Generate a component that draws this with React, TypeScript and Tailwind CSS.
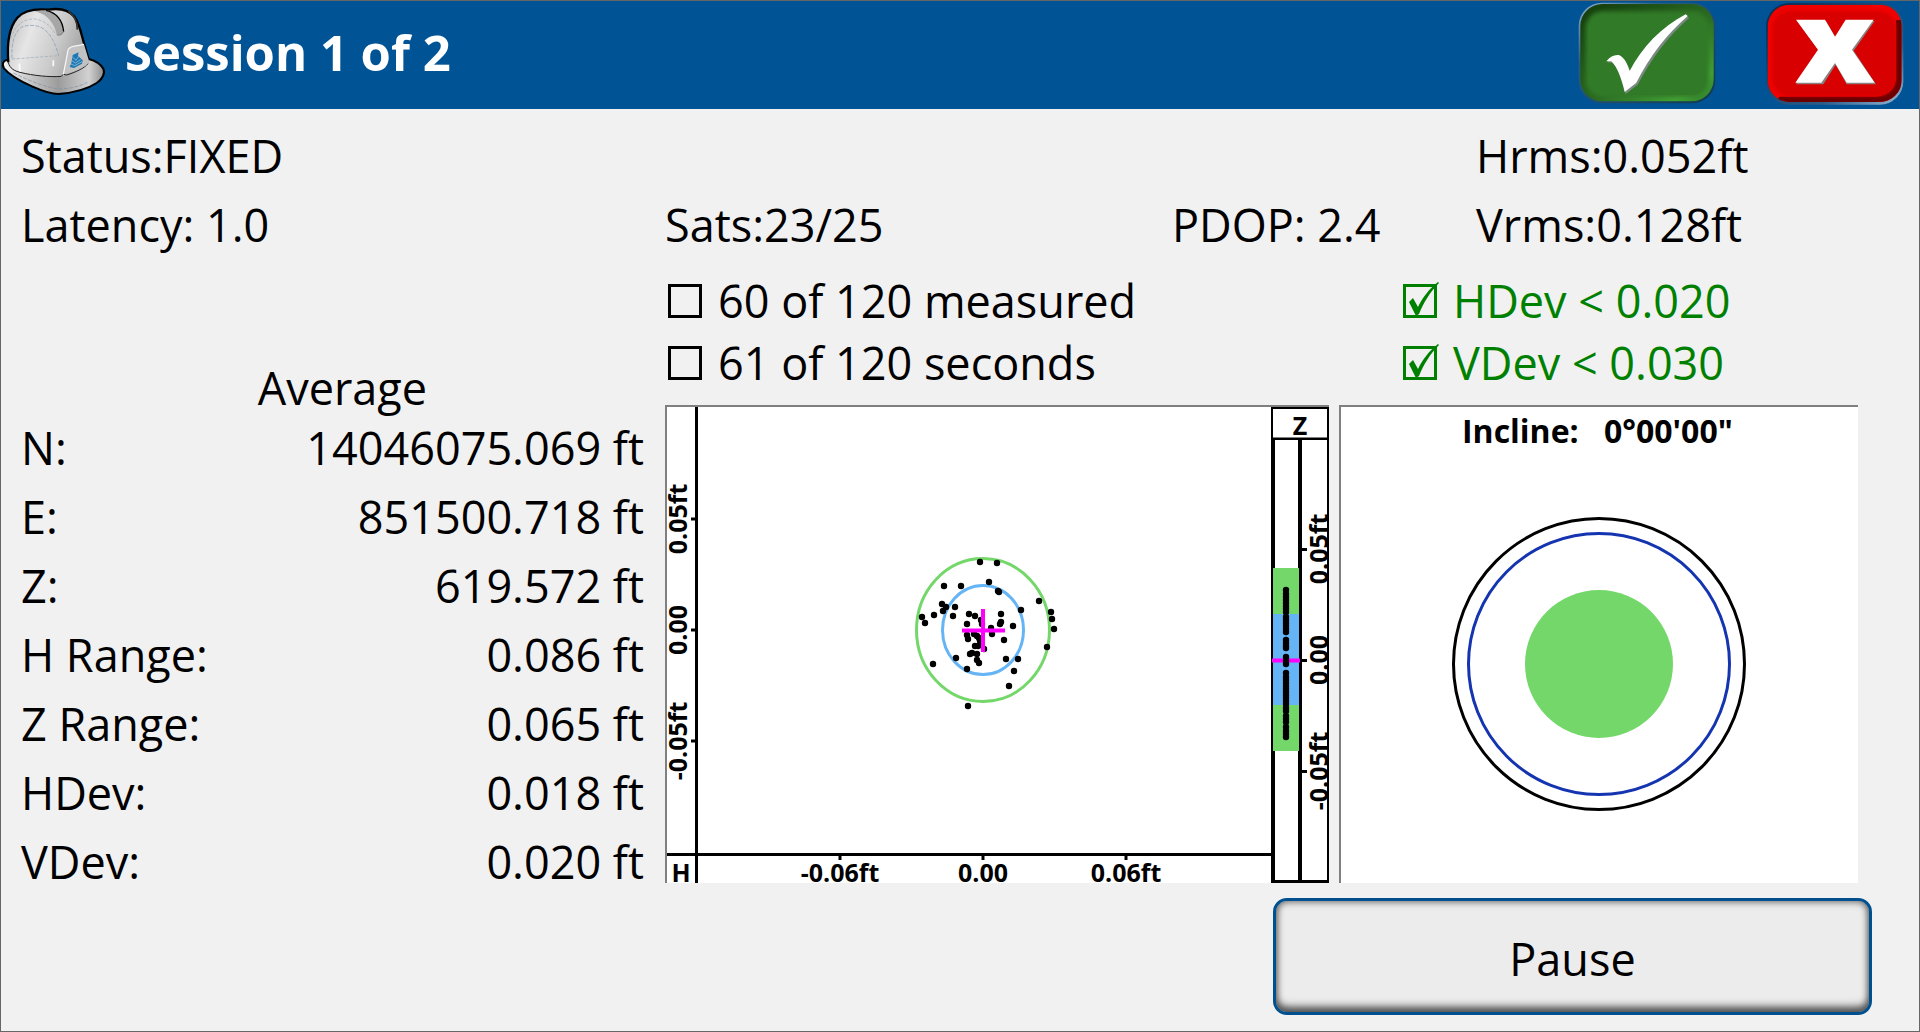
const averages = [
  { label: "N:", value: "14046075.069 ft" },
  { label: "E:", value: "851500.718 ft" },
  { label: "Z:", value: "619.572 ft" },
  { label: "H Range:", value: "0.086 ft" },
  { label: "Z Range:", value: "0.065 ft" },
  { label: "HDev:", value: "0.018 ft" },
  { label: "VDev:", value: "0.020 ft" },
];

const criteria = [
  { id: "measured", label: "60 of 120 measured", met: false },
  { id: "hdev", label: "HDev < 0.020", met: true },
  { id: "seconds", label: "61 of 120 seconds", met: false },
  { id: "vdev", label: "VDev < 0.030", met: true },
];

// Horizontal scatter, offsets from the averaged position
const points = [
  [-3, -68], [14, -67], [-39, -44], [-22, -44], [6, -48], [15, -39], [16, -38], [56, -29],
  [38, -20], [-41, -26], [-37, -23], [-40, -19], [-28, -23], [-30, -14], [-49, -15], [-61, -13],
  [-58, -7], [-14, -16], [-8, -14], [-16, -6], [18, -16], [18, -8], [17, -6], [30, -4],
  [68, -18], [69, -11], [71, -1], [64, 17], [9, 4], [8, -2], [21, 10], [-16, 5],
  [-15, 9], [-2, -10], [-1, -6], [-9, 4], [-6, 6], [-4, 8], [-3, 11], [-2, 14],
  [-5, 16], [-8, 16], [1, 19], [-11, 23], [-13, 24], [-6, 24], [-6, 30], [-4, 33],
  [-27, 28], [-16, 39], [-50, 34], [23, 29], [35, 29], [31, 41], [26, 56], [-15, 76],
];

// Vertical scatter
const heights = [
  183, 187, 190, 193, 196, 199, 202, 205, 210, 213, 216, 219, 222, 225, 233, 236, 239, 241, 250,
  254, 257, 266, 270, 273, 276, 279, 282, 285, 288, 291, 294, 297, 301, 304, 309, 312, 315, 320,
  324, 327, 330,
];

const horizontalTicks = [
  { at: 173, label: "-0.06ft" },
  { at: 316, label: "0.00" },
  { at: 459, label: "0.06ft" },
];

const northTicks = [
  { at: 112, label: "0.05ft" },
  { at: 223, label: "0.00" },
  { at: 334, label: "-0.05ft" },
];

const heightTicks = [
  { at: 142, label: "0.05ft" },
  { at: 253, label: "0.00" },
  { at: 364, label: "-0.05ft" },
];

function HardHat() {
  return (
    <svg viewBox="3 3 318 324" className="h-[108px] w-[106px] shrink-0" aria-hidden="true">
      <defs>
        <linearGradient id="shell" x1="0" y1="0" x2="1" y2="0.3">
          <stop offset="0" stopColor="#b8b8b8" />
          <stop offset="0.35" stopColor="#e6e6e6" />
          <stop offset="0.7" stopColor="#cacaca" />
          <stop offset="1" stopColor="#a4a4a4" />
        </linearGradient>
        <linearGradient id="brim" x1="0" y1="0" x2="1" y2="0">
          <stop offset="0" stopColor="#f4f4f4" />
          <stop offset="0.55" stopColor="#9c9c9c" />
          <stop offset="0.85" stopColor="#d2d2d2" />
          <stop offset="1" stopColor="#8c8c8c" />
        </linearGradient>
      </defs>
      <path
        d="M24 182C8 184 5 196 12 208C30 230 60 246 96 262C130 277 155 285 175 285C215 282 262 270 290 252C308 240 316 222 310 209C303 197 285 185 266 180Z"
        fill="url(#brim)"
        stroke="#000"
        strokeWidth="6"
      />
      <path
        d="M25 188C20 130 28 84 52 56C70 36 100 28 145 32C175 27 205 32 222 52C236 68 242 96 250 126L266 180C268 192 262 200 250 206C232 216 212 222 190 230C150 236 90 230 58 220C40 214 27 206 25 188Z"
        fill="url(#shell)"
      />
      <path
        d="M25 190C20 130 28 84 52 56C70 36 100 28 145 32C175 27 205 32 222 52C236 68 242 96 250 126L266 182"
        fill="none"
        stroke="#000"
        strokeWidth="7"
      />
      <path d="M100 38C130 38 160 62 170 104C180 112 190 108 191 96C186 64 170 42 140 33Z" fill="#9b9b9b" opacity="0.8" />
      <path d="M138 34C172 42 188 68 191 98" fill="none" stroke="#000" strokeWidth="4" />
      <path d="M170 106C178 112 186 106 190 98" fill="none" stroke="#777" strokeWidth="3" />
      <path d="M205 36C225 50 232 70 232 92" fill="none" stroke="#333" strokeWidth="5" />
      <path d="M36 178C34 140 40 104 62 86C80 76 112 76 132 90C154 108 168 138 176 170" fill="none" stroke="#8299ad" strokeWidth="2" strokeDasharray="12 4" />
      <path d="M36 180L92 176L176 170M32 120C44 80 70 58 104 60C130 62 154 82 166 104" fill="none" stroke="#9aabb9" strokeWidth="2" strokeDasharray="10 4" />
      <path d="M58 194L60 220M160 184V202" stroke="#fff" strokeWidth="5" opacity="0.9" />
      <path d="M25 190C28 208 44 216 60 220C100 230 150 235 184 232L190 226L200 228C226 220 252 208 264 194" fill="none" stroke="#222" strokeWidth="3" />
      <path d="M190 226L204 154C206 146 212 144 220 142L252 136L266 182C266 194 258 200 246 206C230 216 208 222 190 226Z" fill="#c2c2c2" />
      <path d="M190 226L204 154C206 146 212 144 220 142L252 136" fill="none" stroke="#f4f4f4" strokeWidth="4" />
      <path d="M40 222C90 246 130 262 172 270C210 270 240 262 262 250" fill="none" stroke="#7d8fa0" strokeWidth="2" strokeDasharray="12 4" />
      <path d="M218 168L236 160L234 170L248 184L246 194L222 207L209 204L214 192Z" fill="#1b78b6" />
      <path d="M217 174L228 184L236 172M214 184L226 192L242 182M211 194L224 200L246 188" fill="none" stroke="#b9cbd8" strokeWidth="2" />
    </svg>
  );
}

function AcceptIcon() {
  return (
    <svg viewBox="50 3 420 318" className="h-[106px] w-[140px]" aria-hidden="true">
      <defs>
        <filter id="accept-soft" x="-20%" y="-20%" width="140%" height="140%">
          <feGaussianBlur stdDeviation="7" />
        </filter>
        <linearGradient id="accept-rim" x1="0" y1="0" x2="1" y2="1">
          <stop offset="0" stopColor="#8fb0d0" />
          <stop offset="0.3" stopColor="#2c5c80" />
          <stop offset="1" stopColor="#10384e" />
        </linearGradient>
        <linearGradient id="accept-bevel" x1="0" y1="0" x2="1" y2="1">
          <stop offset="0.1" stopColor="#17420f" />
          <stop offset="0.55" stopColor="#2a6c22" />
          <stop offset="0.85" stopColor="#42a234" />
          <stop offset="1" stopColor="#2f7a28" />
        </linearGradient>
      </defs>
      <rect x="55" y="8" width="410" height="302" rx="70" fill="url(#accept-rim)" />
      <rect x="60" y="12" width="400" height="292" rx="66" fill="url(#accept-bevel)" />
      <rect x="76" y="34" width="370" height="256" rx="50" fill="#317a28" filter="url(#accept-soft)" />
      <rect x="84" y="44" width="352" height="240" rx="44" fill="#317a28" />
      <path d="M141 187C152 172 164 166 178 168C192 174 202 192 211 217C248 146 304 86 378 46L386 54C324 108 276 172 232 254L196 282C188 244 172 202 156 188Z" fill="#7a8a80" />
      <path d="M138 184C150 169 162 163 176 165C190 171 200 188 208 213C245 142 302 82 376 43L382 48C320 102 270 166 228 248L193 276C185 240 170 198 153 184Z" fill="#fff" />
    </svg>
  );
}

function CancelIcon() {
  return (
    <svg viewBox="612 3 420 318" className="h-[106px] w-[140px]" aria-hidden="true">
      <defs>
        <filter id="cancel-soft" x="-20%" y="-20%" width="140%" height="140%">
          <feGaussianBlur stdDeviation="5" />
        </filter>
        <linearGradient id="cancel-rim" x1="0" y1="0" x2="1" y2="1">
          <stop offset="0" stopColor="#062c50" />
          <stop offset="0.7" stopColor="#2c5c88" />
          <stop offset="1" stopColor="#9cb8d4" />
        </linearGradient>
        <clipPath id="cancel-clip">
          <rect x="623" y="14" width="402" height="292" rx="66" />
        </clipPath>
      </defs>
      <rect x="618" y="9" width="412" height="305" rx="70" fill="url(#cancel-rim)" />
      <g clipPath="url(#cancel-clip)">
        <rect x="623" y="14" width="402" height="292" fill="#f00000" />
        <path d="M1025 60V306H640L660 290H950Q1008 280 1008 230V60Z" fill="#6c0000" />
        <rect x="638" y="34" width="370" height="254" rx="52" fill="#d80000" filter="url(#cancel-soft)" />
      </g>
      <path d="M712 63H798L827 114L860 63H944L881 152L948 253H860L827 194L790 253H708L777 152Z" fill="#8a8080" />
      <path d="M708 59H795L825 110L857 59H941L876 149L944 248H860L825 189L784 248H706L774 149Z" fill="#fff" />
    </svg>
  );
}

function Criterion({ id, label, met }: { id: string; label: string; met: boolean }) {
  return (
    <div className={`flex items-center gap-4 pl-[3px] ${met ? "text-[#008000]" : "text-black"}`}>
      <span className="relative flex shrink-0">
        <input
          id={id}
          type="checkbox"
          defaultChecked={met}
          className="size-[34px] appearance-none border-3 border-current"
        />
        {met && (
          <svg viewBox="0 0 36 36" className="pointer-events-none absolute -top-0.5 left-0 size-9" aria-hidden="true">
            <path d="M6 20L10 16L15 25C20 15 26 7 35 0L36 1C27 10 21 20 16 32L13 34Z" fill="currentColor" />
          </svg>
        )}
      </span>
      <label htmlFor={id}>{label}</label>
    </div>
  );
}

function ScatterPlot() {
  return (
    <svg viewBox="0 0 662 476" className="block h-auto w-full overflow-visible text-[25px] leading-none font-bold" role="img" aria-label="Position scatter">
      <g stroke="#000" strokeWidth="3">
        <path d="M29.5 0V476M0 447.5H604" />
        {horizontalTicks.map((t) => (
          <path key={t.at} d={`M${t.at} 448V453`} />
        ))}
        {northTicks.map((t) => (
          <path key={t.at} d={`M24 ${t.at}H30`} />
        ))}
      </g>
      <g textAnchor="middle">
        <text x="14" y="475">H</text>
        {horizontalTicks.map((t) => (
          <text key={t.at} x={t.at} y="475">{t.label}</text>
        ))}
        {northTicks.map((t) => (
          <text key={t.at} transform={`translate(20 ${t.at}) rotate(-90)`}>{t.label}</text>
        ))}
      </g>

      <ellipse cx="316" cy="223" rx="66.5" ry="71.5" fill="none" stroke="#74d76a" strokeWidth="3" />
      <ellipse cx="316" cy="223" rx="40.5" ry="44.5" fill="none" stroke="#64b4f6" strokeWidth="3" />
      {points.map(([dx, dy]) => (
        <circle key={`${dx},${dy}`} cx={316 + dx} cy={223 + dy} r="3.2" />
      ))}
      <path d="M295 223.5H338M316 202V245" stroke="#f0f" strokeWidth="4" />

      {/* Height strip */}
      <path d="M604 0H662V476H604Z" />
      <path d="M606 2H660V30.5H606ZM608 33H631V473H608ZM635 33H660V473H635Z" fill="#fff" />
      <rect x="606" y="161" width="26" height="183" fill="#74d76a" />
      <rect x="606" y="207" width="26" height="91" fill="#64b4f6" />
      <path d="M605 253.5H633" stroke="#f0f" strokeWidth="4" />
      {heights.map((y) => (
        <circle key={y} cx="619" cy={y} r="3.2" />
      ))}
      <g textAnchor="middle">
        <text x="633" y="28">Z</text>
        {heightTicks.map((t) => (
          <g key={t.at}>
            <path d={`M634 ${t.at + 0.5}H640`} stroke="#000" strokeWidth="3" />
            <text transform={`translate(661 ${t.at}) rotate(-90)`}>{t.label}</text>
          </g>
        ))}
      </g>
    </svg>
  );
}

function InclineBubble() {
  return (
    <svg viewBox="0 0 517 476" className="block h-auto w-full text-[32px] font-bold" role="img" aria-label="Incline">
      <text x="121" y="36">Incline:</text>
      <text x="263" y="36">0°00'00"</text>
      <circle cx="258" cy="257" r="145.5" fill="none" stroke="#000" strokeWidth="3" />
      <circle cx="258" cy="257" r="130.5" fill="none" stroke="#1434b0" strokeWidth="3" />
      <circle cx="258" cy="257" r="74" fill="#74d76a" />
    </svg>
  );
}

export default function App() {
  return (
    <div className="min-h-screen border border-[#666] bg-[#f1f1f1] font-['Open_Sans','Noto_Sans',sans-serif] text-[45px] text-black">
      <header className="flex h-[108px] items-center bg-[#005395] pr-[15px] pb-0.5">
        <HardHat />
        <h1 className="ml-[18px] flex-1 pb-0.5 text-[49px] font-bold text-white">Session 1 of 2</h1>
        <div className="flex gap-[47px]">
          <button type="button" aria-label="Accept">
            <AcceptIcon />
          </button>
          <button type="button" aria-label="Cancel">
            <CancelIcon />
          </button>
        </div>
      </header>

      <main className="flex gap-[21px] pt-3 pr-[47px] pl-5">
        <section className="flex-[623] whitespace-nowrap">
          <p className="leading-[69px]">Status:FIXED</p>
          <p className="leading-[69px]">Latency: 1.0</p>
          <table className="mt-[103px] w-full">
            <thead>
              <tr className="leading-[51px]">
                <td className="w-[38%] p-0" />
                <th scope="col" className="p-0 text-left font-normal">Average</th>
              </tr>
            </thead>
            <tbody>
              {averages.map((row) => (
                <tr key={row.label} className="leading-[69px]">
                  <th scope="row" className="p-0 text-left font-normal">{row.label}</th>
                  <td className="p-0 text-right">{row.value}</td>
                </tr>
              ))}
            </tbody>
          </table>
        </section>

        <section className="flex-[1207] whitespace-nowrap">
          <div className="grid grid-cols-[507fr_304fr_396fr] leading-[69px]">
            <p className="col-start-3">Hrms:0.052ft</p>
            <p className="col-start-1">Sats:23/25</p>
            <p>PDOP: 2.4</p>
            <p>Vrms:0.128ft</p>
          </div>

          <div className="mt-[11px] grid grid-cols-[735fr_472fr] leading-[62px]">
            {criteria.map((c) => (
              <Criterion key={c.id} {...c} />
            ))}
          </div>

          <div className="mt-[11px] mr-[14px] grid grid-cols-[664fr_519fr] gap-[10px]">
            <div className="border-t-2 border-l-2 border-[#808080] bg-white">
              <ScatterPlot />
            </div>
            <div className="border-t-2 border-l-2 border-[#808080] bg-white">
              <InclineBubble />
            </div>
          </div>

          <button
            type="button"
            className="mt-[15px] ml-auto block h-[117px] w-[599px] rounded-[14px] border-3 border-[#00508f] bg-[#ececec] pt-1 shadow-[inset_0_-7px_9px_-2px_#555,inset_0_0_7px_1px_#666]"
          >
            Pause
          </button>
        </section>
      </main>
    </div>
  );
}
